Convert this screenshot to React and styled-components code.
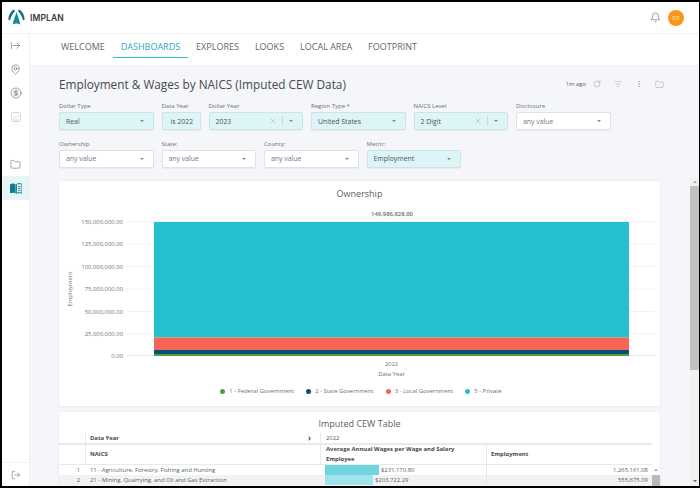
import React from "react";
import styled, { createGlobalStyle } from "styled-components";
import {
  ArrowRightFromLine, MapPin, CircleDollarSign, Folder, LogOut,
  Bell, RotateCw, ListFilter, MoreVertical, X,
} from "lucide-react";

const Global = createGlobalStyle`
  html, body { margin: 0; padding: 0; background: #fff; }
  * { box-sizing: border-box; }
  body { font-family: "Open Sans", "Liberation Sans", sans-serif; }
`;

const Frame = styled.div`
  width: 700px; height: 488px; overflow: hidden; position: relative;
  display: flex; flex-direction: column; background: #fff;
  border-style: solid; border-color: #000; border-width: 2px 1px 2px 2px;
`;
const Header = styled.header`
  height: 32px; flex: none; display: flex; align-items: center;
  padding: 0 15px 0 6px; border-bottom: 1px solid #f0f1f3;
`;
const Brand = styled.div`display: flex; align-items: center; gap: 5px; flex: 1;`;
const BrandName = styled.span`
  font-family: "Inter", sans-serif; font-size: 8.5px; font-weight: 600; color: #33393d; letter-spacing: 0.1px;
`;
const Avatar = styled.div`
  width: 16px; height: 16px; border-radius: 50%; background: #f7981d; color: #fde3bd;
  font-size: 6px; display: flex; align-items: center; justify-content: center; margin-left: 7px;
`;
const Body = styled.div`flex: 1; display: flex; min-height: 0;`;
const Side = styled.nav`
  width: 28px; flex: none; display: flex; flex-direction: column; align-items: stretch;
  border-right: 1px solid #f0f1f3;
`;
const SideItem = styled.div`
  height: 24px; display: flex; align-items: center; justify-content: center;
  margin-top: ${(p) => p.$mt || 0}px;
  color: ${(p) => (p.$faint ? "#c9cdd0" : "#5b6166")};
  background: ${(p) => (p.$active ? "#e8f5f6" : "transparent")};
`;
const SideFoot = styled.div`
  margin-top: auto; height: 24px; border-top: 1px solid #f0f1f3; display: flex; align-items: center; justify-content: center; color: #5b6166;
`;
const Main = styled.main`flex: 1; min-width: 0; display: flex; flex-direction: column;`;
const Tabs = styled.div`height: 31px; flex: none; display: flex; padding-left: 23px; align-items: flex-start;`;
const Tab = styled.div`
  height: 24px; padding: 2px 8px 0; display: flex; align-items: center; font-size: 9px; white-space: nowrap;
  color: ${(p) => (p.$active ? "#2aa9bb" : "#62676b")};
  border-bottom: 1.5px solid ${(p) => (p.$active ? "#2ebccb" : "transparent")};
`;
const Content = styled.div`
  flex: 1; min-height: 0; background: #f5f6f9; padding: 9px 39px 0 29px; overflow: hidden;
`;
const TitleRow = styled.div`height: 20px; display: flex; align-items: center; justify-content: space-between;`;
const Title = styled.h1`
  margin: 0; font-size: 11.8px; font-weight: 400; color: #45494d; white-space: nowrap;
`;
const Tools = styled.div`display: flex; align-items: center; color: #8a8f94; margin-right: -10px;`;
const Ago = styled.span`font-size: 5.9px; color: #5f6468;`;
const Tool = styled.span`width: 21px; display: flex; justify-content: center;`;
const FilterRow = styled.div`display: flex; gap: 8px; margin-top: ${(p) => p.$mt}px;`;
const Field = styled.div`width: ${(p) => p.$w}px; flex: none;`;
const Label = styled.div`height: 11px; line-height: 10px; font-size: 6px; color: #6c7175; white-space: nowrap;`;
const Control = styled.div`
  height: 18px; border-radius: 2px; display: flex; align-items: center; padding: 0 0 0 6px;
  font-size: 6.9px; color: ${(p) => (p.$on ? "#4c5357" : "#73787c")};
  background: ${(p) => (p.$on ? "#def5f7" : "#fff")};
  border: 1px solid ${(p) => (p.$on ? "#cfe3e5" : "#dfe2e5")};
  box-shadow: 0 1px 1px rgba(0, 0, 0, 0.05);
`;
const ControlText = styled.span`flex: 1; white-space: nowrap; overflow: hidden; padding-left: ${(p) => p.$pl || 0}px;`;
const Caret = styled.span`
  width: 0; height: 0; margin-right: ${(p) => p.$mr}px; flex: none;
  border-left: 2.5px solid transparent; border-right: 2.5px solid transparent; border-top: 2.5px solid #80858a;
`;
const Clear = styled.span`display: flex; color: #8f9498; margin-right: 5px;`;
const Divider = styled.span`width: 1px; height: 10px; background: #cdd9db; margin-right: 6px;`;
const Card = styled.section`
  background: #fff; border-radius: 3px; box-shadow: 0 0 3px rgba(40, 50, 60, 0.08);
  margin-top: ${(p) => p.$mt}px; width: 601px; height: ${(p) => p.$h}px; overflow: ${(p) => (p.$clip ? "hidden" : "visible")};
`;
const CardTitle = styled.div`
  text-align: center; color: #5c6165; font-size: 9px; line-height: 14px; height: 19px; padding-top: ${(p) => p.$pt}px;
`;
const ChartSvg = styled.svg`display: block; width: 601px; height: 170px;`;
const AxisName = styled.div`text-align: center; font-size: 5.9px; color: #6a6f73; height: 17px; line-height: 9px; padding-left: 64px;`;
const Legend = styled.div`display: flex; justify-content: center; gap: 12px; padding-left: 3px;`;
const LegendItem = styled.div`display: flex; align-items: center; gap: 4px; font-size: 5.9px; line-height: 9px; color: #6a6f73; white-space: nowrap;`;
const Dot = styled.span`width: 5px; height: 5px; border-radius: 50%; background: ${(p) => p.$c};`;
const Table = styled.div`
  margin-top: 2px; display: grid; grid-template-columns: 26px 235px 166px 166px 8px; font-size: 5.9px; color: #55595d;
`;
const Cell = styled.div`
  display: flex; align-items: center; height: ${(p) => p.$h}px; min-width: 0; white-space: nowrap;
  justify-content: ${(p) => (p.$end ? "flex-end" : "flex-start")};
  padding: ${(p) => p.$pad || "0 4px"};
  font-weight: ${(p) => (p.$bold ? 700 : 400)};
  color: ${(p) => (p.$bold ? "#44484c" : "#5a5f63")};
  background: ${(p) => (p.$alt ? "#f1f3f3" : "transparent")};
  border-left: ${(p) => (p.$line ? "1px solid #e6e8ea" : "0")};
  border-bottom: ${(p) => (p.$under ? `${p.$under}px solid #e6eaec` : "0")};
`;
const WrapHead = styled.span`white-space: normal; line-height: 10px; max-width: 140px;`;
const Chevron = styled.span`margin-left: auto; font-size: 8px; padding-right: 5px; color: #444; font-weight: 700;`;
const Bar = styled.span`height: 10px; flex: none; background: ${(p) => p.$c}; margin-right: 2px;`;
const MiniUp = styled.span`
  width: 0; height: 0; border-left: 2px solid transparent; border-right: 2px solid transparent; border-bottom: 2.5px solid #9a9a9a;
`;
const MiniThumb = styled.div`width: 100%; height: 100%; background: #b9b9b9;`;
const Scrollbar = styled.div`
  position: absolute; right: 0; top: 175px; bottom: 0; width: 9px; background: #f1f1f1;
  display: flex; flex-direction: column; align-items: center;
`;
const ScrollUp = styled.div`height: 9px; display: flex; align-items: center; justify-content: center; flex: none;`;
const ScrollThumb = styled.div`width: 100%; height: 184px; background: #c1c1c1; flex: none;`;
const ScrollDown = styled.div`margin-top: auto; height: 10px; display: flex; align-items: center; justify-content: center;`;
const MiniDown = styled.span`
  width: 0; height: 0; border-left: 2px solid transparent; border-right: 2px solid transparent; border-top: 2.5px solid #666;
`;

const Logo = () => (
  <svg width="17" height="17" viewBox="0 0 17 17">
    <path d="M8.5 3 C9.6 6.5 11.2 11 12.4 15.4 Q8.5 13.6 4.6 15.4 C5.8 11 7.4 6.5 8.5 3 Z" fill="#0f8a9c" />
    <path d="M5.6 .6 C2.6 2.6 .6 6 .3 10.4 L2 11.4 C2.8 7.6 4.6 4.4 7.2 2 Z" fill="#126f7e" />
    <path d="M11.4 .6 C14.4 2.6 16.4 6 16.7 10.4 L15 11.4 C14.2 7.6 12.4 4.4 9.8 2 Z" fill="#126f7e" />
  </svg>
);

const BookIcon = () => (
  <svg width="12" height="11" viewBox="0 0 12 11">
    <path d="M0 1.2 C2 .4 4 .4 5.6 1.4 V10.4 C4 9.5 2 9.5 0 10.2 Z" fill="#0d7f92" />
    <path d="M6.4 1.4 C8 .4 10 .4 12 1.2 V10.2 C10 9.5 8 9.5 6.4 10.4 Z" fill="none" stroke="#0d7f92" strokeWidth="1" />
    <path d="M8 3.6 H10.6 M8 5.6 H10.6 M8 7.6 H10.6" stroke="#0d7f92" strokeWidth=".8" />
  </svg>
);

const BoxChart = () => (
  <svg width="10" height="10" viewBox="0 0 10 10" fill="none" stroke="currentColor" strokeWidth=".8">
    <rect x=".5" y=".5" width="9" height="9" rx="1" />
    <path d="M2 6.5 L4 4.8 L5.4 5.6 L8 3" />
    <path d="M2 8 H8" />
  </svg>
);

const Select = ({ label, value, w, on, clear, pl }) => (
  <Field $w={w}>
    <Label>{label}</Label>
    <Control $on={on}>
      <ControlText $pl={pl}>{value}</ControlText>
      {clear ? (
        <>
          <Clear><X size={8} strokeWidth={1.2} /></Clear>
          <Divider />
          <Caret $mr={9} />
        </>
      ) : w > 60 ? <Caret $mr={9} /> : null}
    </Control>
  </Field>
);

const ticks = [
  ["150,000,000.00", 21.5], ["125,000,000.00", 44], ["100,000,000.00", 66.5],
  ["75,000,000.00", 89], ["50,000,000.00", 111.5], ["25,000,000.00", 134], ["0.00", 155.5],
];
const legend = [
  ["1 - Federal Government", "#4c9f3d"], ["2 - State Government", "#0a4d7c"],
  ["3 - Local Government", "#f66454"], ["5 - Private", "#25bfcf"],
];

const Chart = () => (
  <ChartSvg viewBox="0 0 601 170">
    {ticks.map(([t, y]) => (
      <g key={t}>
        <line x1="68" x2="596" y1={y} y2={y} stroke={t === "0.00" ? "#e3e5f0" : "#f1f2f5"} strokeWidth="1" />
        <text x="64" y={y + 2.1} textAnchor="end" fontSize="5.9" fill="#6e7377" fontFamily="Open Sans">{t}</text>
      </g>
    ))}
    <rect x="95" y="22" width="475" height="115.5" fill="#25bfcf" />
    <rect x="95" y="137.5" width="475" height="12.5" fill="#f66454" />
    <rect x="95" y="150" width="475" height="4" fill="#0a4d7c" />
    <rect x="95" y="154" width="475" height="2" fill="#4c9f3d" />
    <text x="333" y="16" textAnchor="middle" fontSize="5.9" fontWeight="600" fill="#666b6f" fontFamily="Open Sans">149,986,828.00</text>
    <text x="332.5" y="166" textAnchor="middle" fontSize="5.9" fill="#6e7377" fontFamily="Open Sans">2022</text>
    <text transform="translate(13 89) rotate(-90)" textAnchor="middle" fontSize="5.9" fill="#6e7377" fontFamily="Open Sans">Employment</text>
  </ChartSvg>
);

export default function App() {
  return (
    <>
      <Global />
      <Frame>
        <Header>
          <Brand><Logo /><BrandName>IMPLAN</BrandName></Brand>
          <Bell size={11} strokeWidth={1.3} color="#555a5e" />
          <Avatar>DE</Avatar>
        </Header>
        <Body>
          <Side>
            <SideItem $mt={-1}><ArrowRightFromLine size={11} strokeWidth={1.3} /></SideItem>
            <SideItem><MapPin size={11} strokeWidth={1.3} /></SideItem>
            <SideItem><CircleDollarSign size={12} strokeWidth={1.2} /></SideItem>
            <SideItem $faint><BoxChart /></SideItem>
            <SideItem $mt={23}><Folder size={11} strokeWidth={1.2} /></SideItem>
            <SideItem $active><BookIcon /></SideItem>
            <SideFoot><LogOut size={10} strokeWidth={1.3} /></SideFoot>
          </Side>
          <Main>
            <Tabs>
              <Tab>WELCOME</Tab>
              <Tab $active>DASHBOARDS</Tab>
              <Tab>EXPLORES</Tab>
              <Tab>LOOKS</Tab>
              <Tab>LOCAL AREA</Tab>
              <Tab>FOOTPRINT</Tab>
            </Tabs>
            <Content>
              <TitleRow>
                <Title>Employment &amp; Wages by NAICS (Imputed CEW Data)</Title>
                <Tools>
                  <Ago>1m ago</Ago>
                  <Tool><RotateCw size={8} strokeWidth={1.3} /></Tool>
                  <Tool><ListFilter size={8} strokeWidth={1.2} /></Tool>
                  <Tool><MoreVertical size={8} strokeWidth={1.5} /></Tool>
                  <Tool><Folder size={9} strokeWidth={1.1} /></Tool>
                </Tools>
              </TitleRow>
              <FilterRow $mt={7}>
                <Select label="Dollar Type" value="Real" w={94.5} on />
                <Select label="Data Year" value="is 2022" w={39} on pl={2} />
                <Select label="Dollar Year" value="2023" w={94.5} on clear />
                <Select label="Region Type *" value="United States" w={94.5} on />
                <Select label="NAICS Level" value="2 Digit" w={94.5} on clear />
                <Select label="Disclosure" value="any value" w={94.5} />
              </FilterRow>
              <FilterRow $mt={8.5}>
                <Select label="Ownership" value="any value" w={94.5} />
                <Select label="State:" value="any value" w={94.5} />
                <Select label="County:" value="any value" w={94.5} />
                <Select label="Metric:" value="Employment" w={94.5} on />
              </FilterRow>
              <Card $mt={13} $h={225}>
                <CardTitle $pt={6}>Ownership</CardTitle>
                <Chart />
                <AxisName>Data Year</AxisName>
                <Legend>
                  {legend.map(([t, c]) => (
                    <LegendItem key={t}><Dot $c={c} />{t}</LegendItem>
                  ))}
                </Legend>
              </Card>
              <Card $mt={6} $h={90} $clip>
                <CardTitle $pt={5}>Imputed CEW Table</CardTitle>
                <Table>
                  <Cell $h={12} $under={2} />
                  <Cell $h={12} $under={2} $line $bold>Data Year<Chevron>›</Chevron></Cell>
                  <Cell $h={12} $under={2} $line $pad="0 0 0 5px">2022</Cell>
                  <Cell $h={12} $under={2} />
                  <Cell $h={12} />

                  <Cell $h={20} $under={1} />
                  <Cell $h={20} $under={1} $line $bold>NAICS</Cell>
                  <Cell $h={20} $under={1} $line $bold $pad="0 0 0 5px"><WrapHead>Average Annual Wages per Wage and Salary Employee</WrapHead></Cell>
                  <Cell $h={20} $under={1} $line $bold>Employment</Cell>
                  <Cell $h={20} />

                  <Cell $h={10} $end $pad="0 5px 0 0">1</Cell>
                  <Cell $h={10} $pad="0 0 0 5px">11 - Agriculture, Forestry, Fishing and Hunting</Cell>
                  <Cell $h={10} $pad="0 0 0 5px"><Bar $c="#71d4de" style={{ width: 54 }} />$231,170.80</Cell>
                  <Cell $h={10} $end $line>1,265,161.08</Cell>
                  <Cell $h={10} $pad="0" style={{ justifyContent: "center" }}><MiniUp /></Cell>

                  <Cell $h={11} $alt $end $pad="0 5px 0 0">2</Cell>
                  <Cell $h={11} $alt $pad="0 0 0 5px">21 - Mining, Quarrying, and Oil and Gas Extraction</Cell>
                  <Cell $h={11} $alt $pad="0 0 0 5px"><Bar $c="#a0e3ea" style={{ width: 48 }} />$203,722.29</Cell>
                  <Cell $h={11} $alt $end $line>555,675.09</Cell>
                  <Cell $h={11} $pad="0"><MiniThumb /></Cell>
                </Table>
              </Card>
            </Content>
          </Main>
        </Body>
        <Scrollbar>
          <ScrollUp><MiniUp /></ScrollUp>
          <ScrollThumb />
          <ScrollDown><MiniDown /></ScrollDown>
        </Scrollbar>
      </Frame>
    </>
  );
}
